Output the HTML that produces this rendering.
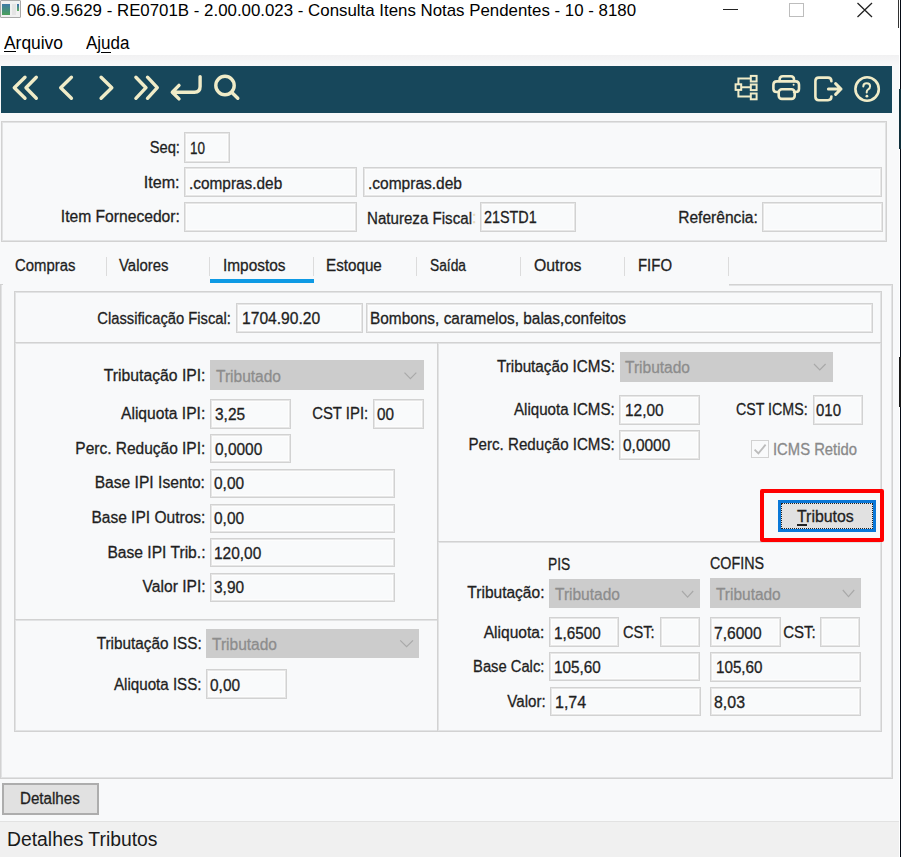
<!DOCTYPE html>
<html><head><meta charset="utf-8">
<style>
html,body{margin:0;padding:0;width:901px;height:857px;overflow:hidden;background:#f8f9fa;font-family:"Liberation Sans",sans-serif;}
.a{position:absolute;box-sizing:border-box;}
.t{position:absolute;white-space:pre;line-height:normal;font-family:"Liberation Sans",sans-serif;-webkit-text-stroke:0.3px currentColor;}
.bx{position:absolute;box-sizing:border-box;border:1px solid #d2d2d2;background:#f9fafb;box-shadow:inset 0 0 0 1px #e6e6e6,inset 0 0 0 2px #fdfdfd;}
.dd{position:absolute;box-sizing:border-box;background:#cccccc;}
.pn{position:absolute;box-sizing:border-box;border:1px solid #d2d2d2;box-shadow:inset 0 0 0 1px #e2e3e4;}
.sep{position:absolute;width:1px;background:#dcdcdc;top:257px;height:19px;}
</style></head><body>
<!-- title bar + menu -->
<div class="a" style="left:0;top:0;width:901px;height:55px;background:#ffffff"></div>
<div class="a" style="left:0;top:55px;width:899px;height:11px;background:linear-gradient(#f1f1f2,#f9f9fa)"></div>
<!-- window icon -->
<div class="a" style="left:0;top:0;width:21px;height:18px;border:1px solid #a9a9a9;background:#f1f1f1;border-radius:1px"></div>
<div class="a" style="left:2px;top:4px;width:8px;height:11px;background:linear-gradient(#3d7aa6,#4aa05a)"></div>
<div class="a" style="left:12px;top:4px;width:4px;height:11px;background:#e4e4e4"></div>
<div class="a" style="left:17px;top:4px;width:2px;height:7px;background:linear-gradient(#3d6fb0,#62b060)"></div>
<!-- window controls -->
<div class="a" style="left:723px;top:9px;width:15px;height:1px;background:#222"></div>
<div class="a" style="left:789px;top:3px;width:15px;height:14px;border:1px solid #bdbdbd"></div>
<svg class="a" style="left:0;top:0" width="901" height="30"><path d="M857.5 3 L872 17 M872 3 L857.5 17" stroke="#222" stroke-width="1.3" fill="none"/></svg>
<!-- menu underlines -->
<div class="a" style="left:4px;top:51px;width:12px;height:1px;background:#000"></div>
<div class="a" style="left:101px;top:51.5px;width:10px;height:1px;background:#000"></div>

<!-- toolbar -->
<div class="a" style="left:1px;top:66px;width:891px;height:47px;background:#17475b"></div>
<svg class="a" style="left:0;top:60px" width="901" height="60" viewBox="0 60 901 60">
<g stroke="#f0ecc8" stroke-width="3.4" fill="none" stroke-linecap="round" stroke-linejoin="round">
<path d="M25 77.2 L14.3 87.7 L25 98.3 M36.3 77.2 L26 87.7 L36.3 98.3"/>
<path d="M71.4 77.2 L60.7 87.7 L71.4 98.3"/>
<path d="M101.1 77.2 L111.8 87.7 L101.1 98.3"/>
<path d="M135.9 77.2 L146 87.7 L135.9 98.3 M147.5 77.2 L157.3 87.7 L147.5 98.3"/>
<path d="M200.1 76.6 V86.5 Q200.1 92.2 194.4 92.2 H173.2 M179 85.4 L172.3 92.2 L179 98.9"/>
<circle cx="225" cy="85.5" r="9.2"/>
<path d="M232.4 93 L237.8 98.3"/>
</g>
<g stroke="#f0ecc8" stroke-width="2" fill="none">
<rect x="735.6" y="84.3" width="5.6" height="5.6"/>
<rect x="750.8" y="75.9" width="5.8" height="5.6"/>
<rect x="750.8" y="84.5" width="5.8" height="5.6"/>
<rect x="750.8" y="93.5" width="5.8" height="5.8"/>
<path d="M738.4 84.3 V78.6 H750.8 M741.2 87.2 H750.8 M738.4 89.9 V96.4 H750.8"/>
</g>
<g stroke="#f0ecc8" stroke-width="2.6" fill="none" stroke-linecap="round" stroke-linejoin="round">
<path d="M779.6 81 V79.5 Q779.6 76.3 782.8 76.3 H790.8 Q794 76.3 794 79.5 V81"/>
<path d="M778.4 92 H776.6 Q773.4 92 773.4 88.8 V84.8 Q773.4 81.4 776.8 81.4 H795.6 Q799 81.4 799 84.8 V88.8 Q799 92 795.8 92 H794"/>
<rect x="778.7" y="89.3" width="16" height="9.6" rx="3.2"/>
<path d="M831.4 81.2 Q831.4 77.6 828 77.6 H818.8 Q815.4 77.6 815.4 81 V96.8 Q815.4 100.2 818.8 100.2 H828 Q831.4 100.2 831.4 96.6"/>
<path d="M828.4 89 H841 M835.6 83.6 L841 89 L835.6 94.4" stroke-width="3"/>
<circle cx="867.1" cy="89" r="11.7"/>
</g>
<circle cx="793.6" cy="84.8" r="1" fill="#f0ecc8"/>
<g stroke="#f0ecc8" stroke-width="2" fill="none" stroke-linecap="round">
<path d="M863.3 86.4 Q863.3 83.2 866.7 83.2 Q870.1 83.2 870.1 86.3 Q870.1 88.3 868.2 89.3 Q866.7 90.1 866.7 92.1 V92.6"/>
</g>
<circle cx="866.9" cy="96.2" r="1.4" fill="#f0ecc8"/>
</svg>

<!-- top panel -->
<div class="pn" style="left:1px;top:121px;width:886px;height:121px"></div>
<div class="bx" style="left:184px;top:132px;width:46px;height:31px"></div>
<div class="bx" style="left:184px;top:167px;width:173px;height:30px"></div>
<div class="bx" style="left:363px;top:167px;width:519px;height:30px"></div>
<div class="bx" style="left:184px;top:202px;width:173px;height:30px"></div>
<div class="bx" style="left:480px;top:202px;width:96px;height:30px"></div>
<div class="bx" style="left:762px;top:202px;width:121px;height:30px"></div>

<!-- tabs -->
<div class="sep" style="left:106px"></div>
<div class="sep" style="left:209px"></div>
<div class="sep" style="left:313px"></div>
<div class="sep" style="left:416px"></div>
<div class="sep" style="left:520px"></div>
<div class="sep" style="left:624px"></div>
<div class="sep" style="left:728px"></div>
<div class="a" style="left:210px;top:279px;width:104px;height:4px;background:#0e9ae4"></div>

<!-- tab page -->
<div class="a" style="left:0;top:284px;width:893px;height:495px;border:1px solid #d2d2d2;border-top:none;box-shadow:inset -1px -1px 0 #e2e3e4, inset 1px 0 0 #e2e3e4"></div>
<div class="a" style="left:729px;top:284px;width:164px;height:1px;background:#d2d2d2"></div><div class="a" style="left:729px;top:285px;width:163px;height:1px;background:#e2e3e4"></div>
<div class="a" style="left:0;top:284px;width:3px;height:1px;background:#d2d2d2"></div>

<!-- panels -->
<div class="pn" style="left:14px;top:291px;width:868px;height:53px"></div>
<div class="pn" style="left:14px;top:342px;width:425px;height:279px"></div>
<div class="pn" style="left:14px;top:619px;width:425px;height:113px"></div>
<div class="pn" style="left:437px;top:342px;width:445px;height:201px"></div>
<div class="pn" style="left:437px;top:541px;width:445px;height:191px"></div>

<!-- classificacao -->
<div class="bx" style="left:236px;top:303px;width:127px;height:30px"></div>
<div class="bx" style="left:366px;top:303px;width:507px;height:30px"></div>

<!-- IPI -->
<div class="dd" style="left:210px;top:360px;width:214px;height:30px"></div>
<div class="bx" style="left:210px;top:399px;width:81px;height:30px"></div>
<div class="bx" style="left:373px;top:399px;width:51px;height:30px"></div>
<div class="bx" style="left:210px;top:434px;width:81px;height:29px"></div>
<div class="bx" style="left:210px;top:469px;width:185px;height:29px"></div>
<div class="bx" style="left:210px;top:504px;width:185px;height:29px"></div>
<div class="bx" style="left:210px;top:538px;width:185px;height:29px"></div>
<div class="bx" style="left:210px;top:573px;width:185px;height:29px"></div>
<!-- ISS -->
<div class="dd" style="left:206px;top:629px;width:213px;height:29px"></div>
<div class="bx" style="left:206px;top:669px;width:81px;height:30px"></div>
<!-- ICMS -->
<div class="dd" style="left:620px;top:352px;width:213px;height:30px"></div>
<div class="bx" style="left:619px;top:395px;width:81px;height:30px"></div>
<div class="bx" style="left:813px;top:395px;width:50px;height:30px"></div>
<div class="bx" style="left:619px;top:430px;width:81px;height:30px"></div>
<!-- checkbox -->
<div class="a" style="left:751px;top:440px;width:18px;height:18px;border:1.8px solid #d2d2d2;background:#f9fafb"></div>
<svg class="a" style="left:751px;top:440px" width="18" height="18"><path d="M3.6 9.6 L7.4 13.4 L14.6 4.6" stroke="#bcbcbc" stroke-width="1.8" fill="none"/></svg>
<!-- red highlight + button -->
<div class="a" style="left:760px;top:489px;width:124px;height:53px;border:4.6px solid #ff0000;border-radius:2px"></div>
<div class="a" style="left:778px;top:500px;width:98px;height:32px;border:3px solid #0a78d8;background:#e1e1e1"></div>
<div class="a" style="left:781px;top:503px;width:92px;height:26px;border:1px dotted #222"></div>
<div class="a" style="left:797px;top:524px;width:10px;height:1.5px;background:#222"></div>
<!-- PIS / COFINS -->
<div class="dd" style="left:549px;top:579px;width:151px;height:29px"></div>
<div class="dd" style="left:710px;top:578px;width:151px;height:30px"></div>
<div class="bx" style="left:549px;top:617px;width:70px;height:30px"></div>
<div class="bx" style="left:660px;top:617px;width:40px;height:30px"></div>
<div class="bx" style="left:710px;top:617px;width:71px;height:30px"></div>
<div class="bx" style="left:820px;top:617px;width:40px;height:30px"></div>
<div class="bx" style="left:549px;top:652px;width:151px;height:29px"></div>
<div class="bx" style="left:710px;top:652px;width:151px;height:30px"></div>
<div class="bx" style="left:550px;top:687px;width:151px;height:29px"></div>
<div class="bx" style="left:710px;top:687px;width:151px;height:29px"></div>

<!-- dropdown chevrons -->
<svg class="a" style="left:0;top:0" width="901" height="857">
<g stroke="#a9a9a9" stroke-width="1.2" fill="none">
<path d="M404.5 372.6 L410.4 378.6 L416.3 372.6"/>
<path d="M400.2 640.4 L406.6 646.6 L413 640.4"/>
<path d="M814 364 L819.8 370 L825.6 364"/>
<path d="M682 591 L687.6 597.2 L693.2 591"/>
<path d="M842.8 590 L848.5 596.6 L854.2 590"/>
</g>
</svg>

<!-- Detalhes button -->
<div class="a" style="left:2px;top:783px;width:97px;height:32px;border:2px solid #adadad;background:#e1e1e1"></div>
<!-- status bar -->
<div class="a" style="left:0;top:821px;width:899px;height:36px;background:#f0f0f0;border-top:1px solid #e2e2e2"></div>
<!-- right edge -->
<div class="a" style="left:899px;top:0;width:1px;height:857px;background:#ffffff"></div>
<div class="a" style="left:900px;top:0;width:1px;height:857px;background:#050a14"></div>
<div class="a" style="left:898px;top:0;width:1px;height:28px;background:#333"></div>
<div class="a" style="left:898.5px;top:89px;width:2px;height:60px;background:#10303c"></div>
<div class="a" style="left:898.5px;top:357px;width:2px;height:50px;background:#1a1a1a"></div>
<div class="t" style="top:1.20px;font-size:17px;color:#000;left:26.70px;transform-origin:0 0;transform:scaleX(0.9914);-webkit-text-stroke:0;">06.9.5629 - RE0701B - 2.00.00.023 - Consulta Itens Notas Pendentes - 10 - 8180</div>
<div class="t" style="top:32.80px;font-size:18px;color:#000;left:4.40px;transform-origin:0 0;transform:scaleX(0.9667);-webkit-text-stroke:0;">Arquivo</div>
<div class="t" style="top:32.80px;font-size:18px;color:#000;left:85.50px;transform-origin:0 0;transform:scaleX(0.9447);-webkit-text-stroke:0;">Ajuda</div>
<div class="t" style="top:139.30px;font-size:16px;color:#1f1f1f;left:146.68px;transform-origin:100% 0;transform:scaleX(0.9173);">Seq:</div>
<div class="t" style="top:139.60px;font-size:16px;color:#1f1f1f;left:189.70px;transform-origin:0 0;transform:scaleX(0.8428);">10</div>
<div class="t" style="top:173.50px;font-size:16px;color:#1f1f1f;left:144.04px;transform-origin:100% 0;transform:scaleX(1.0067);">Item:</div>
<div class="t" style="top:174.50px;font-size:16px;color:#1f1f1f;left:188.80px;transform-origin:0 0;transform:scaleX(0.9614);">.compras.deb</div>
<div class="t" style="top:175.00px;font-size:16px;color:#1f1f1f;left:367.50px;transform-origin:0 0;transform:scaleX(0.9697);">.compras.deb</div>
<div class="t" style="top:207.50px;font-size:16px;color:#1f1f1f;left:58.17px;transform-origin:100% 0;transform:scaleX(0.9768);">Item Fornecedor:</div>
<div class="t" style="top:209.50px;font-size:16px;color:#1f1f1f;left:367.00px;transform-origin:0 0;transform:scaleX(0.9446);">Natureza Fiscal</div>
<div class="t" style="top:209.00px;font-size:16px;color:#e8d8b0;left:472.00px;transform-origin:0 0;transform:scaleX(0.9650);">:</div>
<div class="t" style="top:209.00px;font-size:16px;color:#1f1f1f;left:484.00px;transform-origin:0 0;transform:scaleX(0.8977);">21STD1</div>
<div class="t" style="top:209.00px;font-size:16px;color:#1f1f1f;left:675.77px;transform-origin:100% 0;transform:scaleX(0.9728);">Referência:</div>
<div class="t" style="top:257.30px;font-size:16px;color:#1f1f1f;left:15.10px;transform-origin:0 0;transform:scaleX(0.9306);">Compras</div>
<div class="t" style="top:257.30px;font-size:16px;color:#1f1f1f;left:119.00px;transform-origin:0 0;transform:scaleX(0.9329);">Valores</div>
<div class="t" style="top:257.30px;font-size:16px;color:#1f1f1f;left:222.90px;transform-origin:0 0;transform:scaleX(0.9627);">Impostos</div>
<div class="t" style="top:257.30px;font-size:16px;color:#1f1f1f;left:326.20px;transform-origin:0 0;transform:scaleX(0.9503);">Estoque</div>
<div class="t" style="top:257.30px;font-size:16px;color:#1f1f1f;left:430.00px;transform-origin:0 0;transform:scaleX(0.8610);">Saída</div>
<div class="t" style="top:257.30px;font-size:16px;color:#1f1f1f;left:534.00px;transform-origin:0 0;transform:scaleX(0.9872);">Outros</div>
<div class="t" style="top:257.30px;font-size:16px;color:#1f1f1f;left:637.70px;transform-origin:0 0;transform:scaleX(0.9331);">FIFO</div>
<div class="t" style="top:309.60px;font-size:16px;color:#1f1f1f;left:86.26px;transform-origin:100% 0;transform:scaleX(0.9225);">Classificação Fiscal:</div>
<div class="t" style="top:310.20px;font-size:16px;color:#1f1f1f;left:241.70px;transform-origin:0 0;transform:scaleX(0.9765);">1704.90.20</div>
<div class="t" style="top:310.20px;font-size:16px;color:#1f1f1f;left:369.70px;transform-origin:0 0;transform:scaleX(0.9627);">Bombons, caramelos, balas,confeitos</div>
<div class="t" style="top:367.00px;font-size:16px;color:#1f1f1f;left:102.15px;transform-origin:100% 0;transform:scaleX(0.9821);">Tributação IPI:</div>
<div class="t" style="top:367.50px;font-size:16px;color:#8d8d8d;left:215.90px;transform-origin:0 0;transform:scaleX(0.9701);">Tributado</div>
<div class="t" style="top:405.00px;font-size:16px;color:#1f1f1f;left:119.32px;transform-origin:100% 0;transform:scaleX(0.9770);">Aliquota IPI:</div>
<div class="t" style="top:405.50px;font-size:16px;color:#1f1f1f;left:214.70px;transform-origin:0 0;transform:scaleX(0.9650);">3,25</div>
<div class="t" style="top:405.00px;font-size:16px;color:#1f1f1f;left:307.83px;transform-origin:100% 0;transform:scaleX(0.9307);">CST IPI:</div>
<div class="t" style="top:405.50px;font-size:16px;color:#1f1f1f;left:376.70px;transform-origin:0 0;transform:scaleX(0.9552);">00</div>
<div class="t" style="top:440.00px;font-size:16px;color:#1f1f1f;left:71.30px;transform-origin:100% 0;transform:scaleX(0.9680);">Perc. Redução IPI:</div>
<div class="t" style="top:440.60px;font-size:16px;color:#1f1f1f;left:214.70px;transform-origin:0 0;transform:scaleX(0.9650);">0,0000</div>
<div class="t" style="top:474.30px;font-size:16px;color:#1f1f1f;left:92.35px;transform-origin:100% 0;transform:scaleX(0.9765);">Base IPI Isento:</div>
<div class="t" style="top:474.80px;font-size:16px;color:#1f1f1f;left:214.00px;transform-origin:0 0;transform:scaleX(0.9650);">0,00</div>
<div class="t" style="top:509.40px;font-size:16px;color:#1f1f1f;left:87.91px;transform-origin:100% 0;transform:scaleX(0.9711);">Base IPI Outros:</div>
<div class="t" style="top:509.80px;font-size:16px;color:#1f1f1f;left:214.00px;transform-origin:0 0;transform:scaleX(0.9650);">0,00</div>
<div class="t" style="top:544.10px;font-size:16px;color:#1f1f1f;left:104.82px;transform-origin:100% 0;transform:scaleX(0.9763);">Base IPI Trib.:</div>
<div class="t" style="top:544.50px;font-size:16px;color:#1f1f1f;left:214.00px;transform-origin:0 0;transform:scaleX(0.9650);">120,00</div>
<div class="t" style="top:578.00px;font-size:16px;color:#1f1f1f;left:140.68px;transform-origin:100% 0;transform:scaleX(0.9749);">Valor IPI:</div>
<div class="t" style="top:578.50px;font-size:16px;color:#1f1f1f;left:214.00px;transform-origin:0 0;transform:scaleX(0.9650);">3,90</div>
<div class="t" style="top:635.00px;font-size:16px;color:#1f1f1f;left:91.81px;transform-origin:100% 0;transform:scaleX(0.9573);">Tributação ISS:</div>
<div class="t" style="top:635.50px;font-size:16px;color:#8d8d8d;left:211.50px;transform-origin:0 0;transform:scaleX(0.9701);">Tributado</div>
<div class="t" style="top:676.00px;font-size:16px;color:#1f1f1f;left:109.00px;transform-origin:100% 0;transform:scaleX(0.9459);">Aliquota ISS:</div>
<div class="t" style="top:676.50px;font-size:16px;color:#1f1f1f;left:210.00px;transform-origin:0 0;transform:scaleX(0.9650);">0,00</div>
<div class="t" style="top:358.20px;font-size:16px;color:#1f1f1f;left:491.21px;transform-origin:100% 0;transform:scaleX(0.9516);">Tributação ICMS:</div>
<div class="t" style="top:358.50px;font-size:16px;color:#8d8d8d;left:625.40px;transform-origin:0 0;transform:scaleX(0.9701);">Tributado</div>
<div class="t" style="top:401.20px;font-size:16px;color:#1f1f1f;left:508.38px;transform-origin:100% 0;transform:scaleX(0.9436);">Aliquota ICMS:</div>
<div class="t" style="top:402.30px;font-size:16px;color:#1f1f1f;left:625.40px;transform-origin:0 0;transform:scaleX(0.9650);">12,00</div>
<div class="t" style="top:401.00px;font-size:16px;color:#1f1f1f;left:727.09px;transform-origin:100% 0;transform:scaleX(0.8895);">CST ICMS:</div>
<div class="t" style="top:402.30px;font-size:16px;color:#1f1f1f;left:816.40px;transform-origin:0 0;transform:scaleX(0.9362);">010</div>
<div class="t" style="top:435.90px;font-size:16px;color:#1f1f1f;left:460.37px;transform-origin:100% 0;transform:scaleX(0.9448);">Perc. Redução ICMS:</div>
<div class="t" style="top:437.10px;font-size:16px;color:#1f1f1f;left:623.40px;transform-origin:0 0;transform:scaleX(0.9650);">0,0000</div>
<div class="t" style="top:441.20px;font-size:16px;color:#8a8a8a;left:773.20px;transform-origin:0 0;transform:scaleX(0.9261);">ICMS Retido</div>
<div class="t" style="top:507.50px;font-size:16px;color:#1f1f1f;left:796.50px;transform-origin:0 0;transform:scaleX(0.9930);">Tributos</div>
<div class="t" style="top:555.50px;font-size:16px;color:#1f1f1f;left:548.20px;transform-origin:0 0;transform:scaleX(0.8606);">PIS</div>
<div class="t" style="top:555.40px;font-size:16px;color:#1f1f1f;left:710.00px;transform-origin:0 0;transform:scaleX(0.8933);">COFINS</div>
<div class="t" style="top:584.40px;font-size:16px;color:#1f1f1f;left:465.05px;transform-origin:100% 0;transform:scaleX(0.9704);">Tributação:</div>
<div class="t" style="top:585.80px;font-size:16px;color:#8d8d8d;left:554.60px;transform-origin:0 0;transform:scaleX(0.9687);">Tributado</div>
<div class="t" style="top:585.80px;font-size:16px;color:#8d8d8d;left:716.30px;transform-origin:0 0;transform:scaleX(0.9657);">Tributado</div>
<div class="t" style="top:623.90px;font-size:16px;color:#1f1f1f;left:482.23px;transform-origin:100% 0;transform:scaleX(0.9732);">Aliquota:</div>
<div class="t" style="top:625.30px;font-size:16px;color:#1f1f1f;left:554.00px;transform-origin:0 0;transform:scaleX(0.9543);">1,6500</div>
<div class="t" style="top:623.90px;font-size:16px;color:#1f1f1f;left:620.33px;transform-origin:100% 0;transform:scaleX(0.9143);">CST:</div>
<div class="t" style="top:625.30px;font-size:16px;color:#1f1f1f;left:714.40px;transform-origin:0 0;transform:scaleX(0.9727);">7,6000</div>
<div class="t" style="top:623.90px;font-size:16px;color:#1f1f1f;left:780.73px;transform-origin:100% 0;transform:scaleX(0.9374);">CST:</div>
<div class="t" style="top:658.00px;font-size:16px;color:#1f1f1f;left:467.12px;transform-origin:100% 0;transform:scaleX(0.9215);">Base Calc:</div>
<div class="t" style="top:659.40px;font-size:16px;color:#1f1f1f;left:554.00px;transform-origin:0 0;transform:scaleX(0.9543);">105,60</div>
<div class="t" style="top:659.40px;font-size:16px;color:#1f1f1f;left:715.50px;transform-origin:0 0;transform:scaleX(0.9502);">105,60</div>
<div class="t" style="top:692.60px;font-size:16px;color:#1f1f1f;left:504.69px;transform-origin:100% 0;transform:scaleX(0.9431);">Valor:</div>
<div class="t" style="top:694.00px;font-size:16px;color:#1f1f1f;left:555.40px;transform-origin:0 0;transform:scaleX(1.0019);">1,74</div>
<div class="t" style="top:694.00px;font-size:16px;color:#1f1f1f;left:714.40px;transform-origin:0 0;transform:scaleX(0.9955);">8,03</div>
<div class="t" style="top:790.40px;font-size:16px;color:#1f1f1f;left:19.50px;transform-origin:0 0;transform:scaleX(0.9453);">Detalhes</div>
<div class="t" style="top:828.10px;font-size:19.5px;color:#1a1a1a;left:6.70px;transform-origin:0 0;transform:scaleX(0.9918);-webkit-text-stroke:0;">Detalhes Tributos</div>
</body></html>
